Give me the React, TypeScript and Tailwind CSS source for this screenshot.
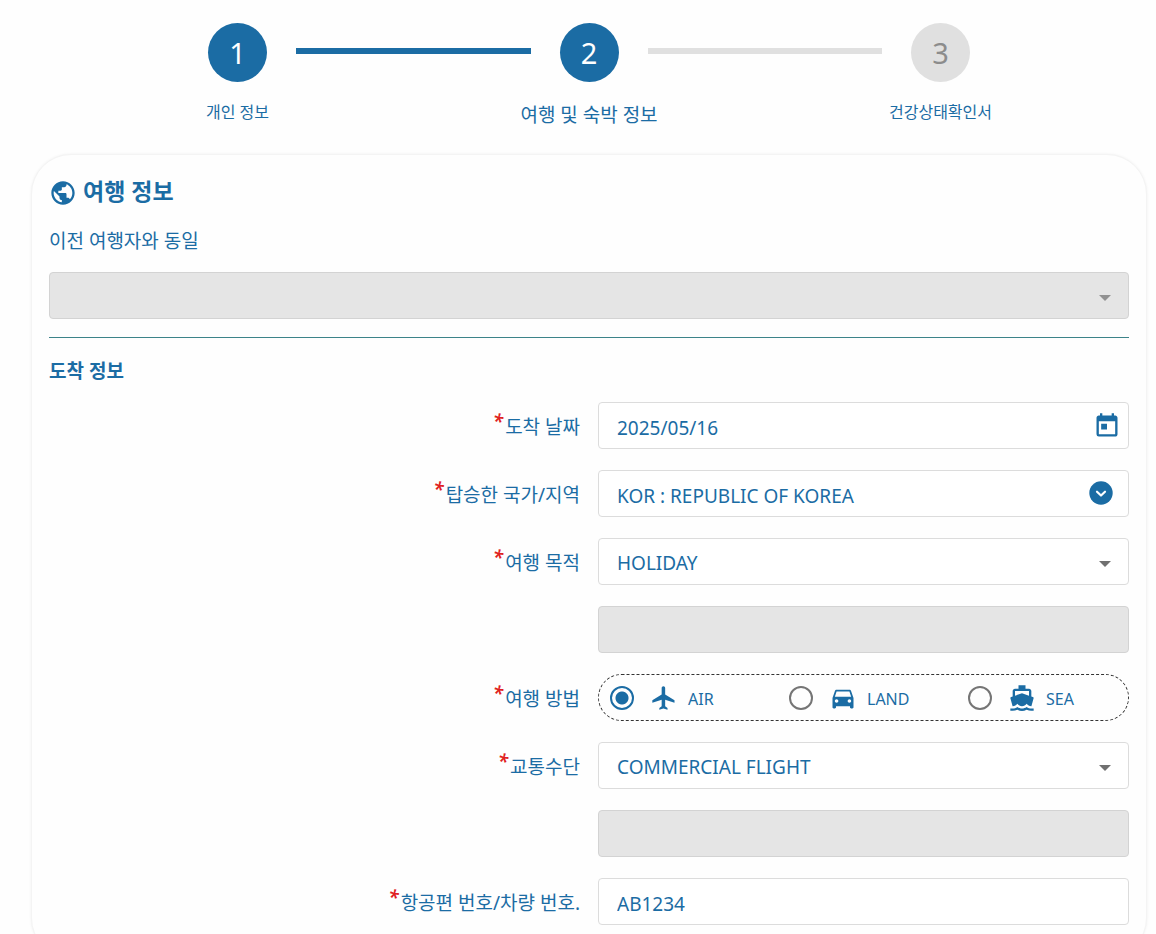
import { useState } from "react";
import {
  MdDirectionsBoat,
  MdDirectionsCar,
  MdFlight,
  MdPublic,
  MdToday,
} from "react-icons/md";

const STEPS = [
  { label: "개인 정보", state: "done" },
  { label: "여행 및 숙박 정보", state: "current" },
  { label: "건강상태확인서", state: "todo" },
];

const TRAVEL_MODES = [
  { value: "AIR", icon: MdFlight },
  { value: "LAND", icon: MdDirectionsCar },
  { value: "SEA", icon: MdDirectionsBoat },
];

const FIELD =
  "block h-[47px] w-full appearance-none rounded border border-[#dcdcdc] bg-white pt-1 pr-12 pl-[18px] text-[19px] text-[#1b6ca4] outline-none focus:border-[#1b6ca4]";
const FIELD_DISABLED =
  "block h-[47px] w-full appearance-none rounded border border-[#d3d3d3] bg-[#e5e5e5] px-[18px] opacity-100";

function Stepper() {
  return (
    <ol className="flex px-[177px] pt-[23px]">
      {STEPS.map((step, i) => (
        <li key={step.label} className={i > 0 ? "flex flex-1" : "flex"}>
          {i > 0 && (
            <div
              className={`mx-[29px] mt-[25px] h-[6px] flex-1 ${
                step.state === "todo" ? "bg-[#e0e0e0]" : "bg-[#1b6ca4]"
              }`}
            />
          )}
          <div className="flex w-[59px] flex-col items-center">
            <div
              className={`flex h-[59px] w-[59px] items-center justify-center rounded-full text-[29px] ${
                step.state === "todo"
                  ? "bg-[#e0e0e0] text-[#8c8c8c]"
                  : "bg-[#1b6ca4] text-white"
              }`}
            >
              {i + 1}
            </div>
            <span
              className={`mt-[18px] whitespace-nowrap ${
                step.state === "current"
                  ? "text-[19px] leading-[30px]"
                  : "text-[16px] leading-[24px]"
              }`}
            >
              {step.label}
            </span>
          </div>
        </li>
      ))}
    </ol>
  );
}

function Arrow({ disabled = false }: { disabled?: boolean }) {
  return (
    <svg
      viewBox="0 0 12 6"
      className={`pointer-events-none absolute top-[23px] right-[18px] h-[6px] w-3 ${
        disabled ? "text-[#919191]" : "text-[#707070]"
      }`}
      fill="currentColor"
      aria-hidden="true"
    >
      <path d="M0 0h12L6 6z" />
    </svg>
  );
}

function FieldLabel({ htmlFor, text }: { htmlFor?: string; text: string }) {
  return (
    <span className="flex h-[47px] items-start justify-end pt-[11px] text-[19px] leading-[28px]">
      <span className="-mt-[6px] mr-[2px] text-[19px] leading-[28px] font-semibold text-[#e02020] italic">
        *
      </span>
      {htmlFor ? <label htmlFor={htmlFor}>{text}</label> : <span id="mode-label">{text}</span>}
    </span>
  );
}

export default function App() {
  const [arrivalDate, setArrivalDate] = useState("2025/05/16");
  const [country, setCountry] = useState("KOR : REPUBLIC OF KOREA");
  const [purpose, setPurpose] = useState("HOLIDAY");
  const [mode, setMode] = useState("AIR");
  const [transport, setTransport] = useState("COMMERCIAL FLIGHT");
  const [flightNo, setFlightNo] = useState("AB1234");

  return (
    <div
      lang="ko"
      className="min-h-screen bg-[#fefefe] pr-[9px] pb-8 pl-[31px] font-['Noto_Sans','Noto_Sans_CJK_KR',sans-serif] text-[#1b6ca4]"
    >
      <Stepper />

      <main className="mt-6 rounded-[40px] border border-[#f4f4f4] bg-[#fefefe] px-[17px] pt-[18px] pb-8 shadow-[0_0_3px_rgba(0,0,0,0.06)]">
        <h1 className="flex items-center gap-[6px] text-[23px] leading-[36px] font-bold">
          <MdPublic className="mt-1 h-7 w-7" />
          여행 정보
        </h1>

        <label htmlFor="previous" className="mt-[18px] block text-[19px] leading-[28px]">
          이전 여행자와 동일
        </label>
        <div className="relative mt-[17px]">
          <select id="previous" disabled className={FIELD_DISABLED} />
          <Arrow disabled />
        </div>

        <hr className="mt-[18px] border-[#3c8389]" />

        <h2 className="mt-[19px] text-[19px] leading-[28px] font-bold">도착 정보</h2>

        <form
          className="mt-[17px] grid grid-cols-2 gap-x-[18px] gap-y-[21px]"
          onSubmit={(e) => e.preventDefault()}
        >
          <FieldLabel htmlFor="arrival" text="도착 날짜" />
          <div className="relative">
            <input
              id="arrival"
              type="text"
              value={arrivalDate}
              onChange={(e) => setArrivalDate(e.target.value)}
              className={FIELD}
            />
            <button type="button" aria-label="날짜 선택" className="absolute top-[10px] right-2">
              <MdToday className="h-7 w-7" />
            </button>
          </div>

          <FieldLabel htmlFor="country" text="탑승한 국가/지역" />
          <div className="relative">
            <input
              id="country"
              type="text"
              value={country}
              onChange={(e) => setCountry(e.target.value)}
              className={FIELD}
            />
            <button type="button" aria-label="국가 선택" className="absolute top-[11px] right-4">
              <svg viewBox="0 0 24 24" className="h-6 w-6" aria-hidden="true">
                <circle cx="12" cy="12" r="11.7" fill="currentColor" />
                <path
                  d="M8 10.7l4 3.8 4-3.8"
                  fill="none"
                  stroke="white"
                  strokeWidth="2.2"
                  strokeLinecap="round"
                  strokeLinejoin="round"
                />
              </svg>
            </button>
          </div>

          <FieldLabel htmlFor="purpose" text="여행 목적" />
          <div className="relative">
            <select
              id="purpose"
              value={purpose}
              onChange={(e) => setPurpose(e.target.value)}
              className={FIELD}
            >
              <option>HOLIDAY</option>
            </select>
            <Arrow />
          </div>

          <input
            type="text"
            disabled
            aria-label="여행 목적 상세"
            className={`${FIELD_DISABLED} col-start-2`}
          />

          <FieldLabel text="여행 방법" />
          <div
            role="radiogroup"
            aria-labelledby="mode-label"
            className="flex h-[47px] items-center rounded-full border border-dashed border-[#333] pl-[11px]"
          >
            {TRAVEL_MODES.map(({ value, icon: Icon }) => (
              <label key={value} className="flex w-[179px] items-center last:w-auto">
                <input
                  type="radio"
                  name="mode"
                  value={value}
                  checked={mode === value}
                  onChange={() => setMode(value)}
                  className="h-6 w-6 appearance-none rounded-full border-2 border-[#757575] checked:border-[#1b6ca4] checked:bg-[radial-gradient(circle,#1b6ca4_6px,transparent_7px)]"
                />
                <Icon className="ml-4 h-7 w-7" />
                <span className="ml-[10px] pt-[2px] text-[16px] leading-[24px]">{value}</span>
              </label>
            ))}
          </div>

          <FieldLabel htmlFor="transport" text="교통수단" />
          <div className="relative">
            <select
              id="transport"
              value={transport}
              onChange={(e) => setTransport(e.target.value)}
              className={FIELD}
            >
              <option>COMMERCIAL FLIGHT</option>
            </select>
            <Arrow />
          </div>

          <input
            type="text"
            disabled
            aria-label="교통수단 상세"
            className={`${FIELD_DISABLED} col-start-2`}
          />

          <FieldLabel htmlFor="flight" text="항공편 번호/차량 번호." />
          <input
            id="flight"
            type="text"
            value={flightNo}
            onChange={(e) => setFlightNo(e.target.value)}
            className={FIELD}
          />
        </form>
      </main>
    </div>
  );
}
